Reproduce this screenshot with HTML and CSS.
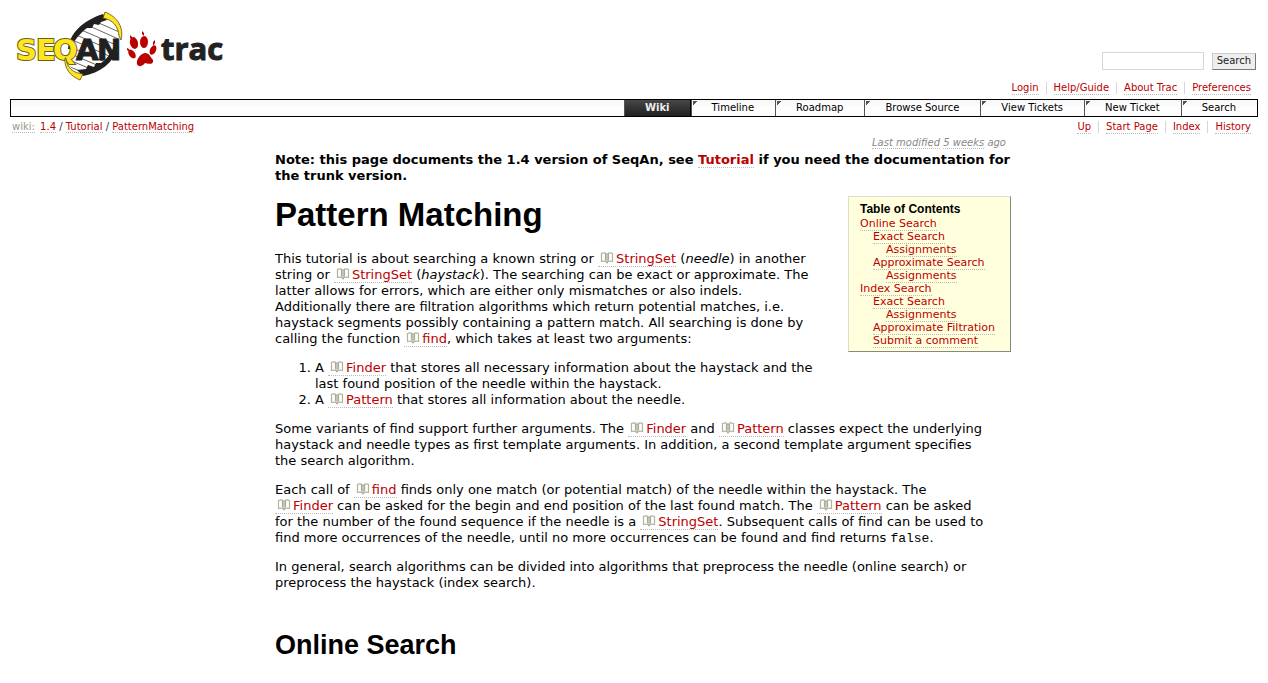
FILE: index.html
```
<!DOCTYPE html>
<html lang="en">
<head>
<meta charset="utf-8">
<title>Pattern Matching – SeqAn</title>
<link rel="stylesheet" href="styles.css">
</head>
<body>
<svg class="defs" aria-hidden="true">
  <symbol id="book" viewBox="0 0 14 12">
    <path d="M7 3C6 1 3.500 .7 1.500 1.500V9.500C3.500 9 6 9 7 10.800C8 9 10.500 9 12.500 9.500V1.500C10.500 .7 8 1 7 3Z" fill="#fffffb" stroke="#b0b2a0" stroke-width="1.200"/>
    <path d="M5.500 2V8.500M8.500 2V8.500M7 3.500V11" fill="none" stroke="#a9ab98" stroke-width="1.200"/>
  </symbol>
</svg>
<header class="banner">
  <a class="logo" href="#" aria-label="SeqAn trac">
    <svg width="216" height="76" viewBox="10 6 216 76" aria-hidden="true">
      <clipPath id="helix"><path d="M105 17C86 24 71 36 69 50L67 60C69 68 75 72 80 72C96 69 110 60 118 48L119 34C117 24 112 19 105 17Z"/></clipPath>
      <g fill="none" stroke="#666" stroke-width="1" clip-path="url(#helix)">
        <path d="M92 20l34 15M85 24l40 18M79 29l44 19M74 34l46 20M70 39l46 20M66 45l46 20M64 51l42 18M62 57l36 15M60 63l30 12"/>
      </g>
      <path d="M68 49C70 33 82 21 103 14L107 20L101 22L99 25L94 24L92 28L87 28C79 34 74 41 70 49Z" fill="#231f20"/>
      <path d="M119 47C113 63 100 73 83 76L77 70L86 69L88 65L94 67L96 63L101 63C107 59 111 53 114 46Z" fill="#231f20"/>
      <path d="M105 12C118 17 124 28 121 40L119 36C118 26 113 20 103 18Z" fill="#ffe51f" stroke="#554d12" stroke-width=".8"/>
      <text class="logo-seqan logo-black" x="76 97" y="60">AN</text>
      <text class="logo-seqan logo-yellow" x="16 36 53" y="60">SEQ</text>
      <path d="M66 58C67 68 73 73 83 74L80 80C70 76 64 68 65 58Z" fill="#ffe51f" stroke="#554d12" stroke-width=".8"/>
      <g fill="#bb0000">
        <ellipse cx="132" cy="54" rx="3" ry="5" transform="rotate(-35 132 54)"/>
        <ellipse cx="134" cy="43" rx="4" ry="6" transform="rotate(-14 134 43)"/>
        <ellipse cx="144" cy="42" rx="4" ry="6" transform="rotate(3 144 42)"/>
        <ellipse cx="153" cy="50" rx="3" ry="5" transform="rotate(25 153 50)"/>
        <path d="M145 53C150 53 150 57 153 60C154 65 148 64 145 63C142 67 138 67 137 64C136 60 140 54 145 53Z"/>
        <path d="M127 48l2 1 1 3-3-2zM130 35l2 2v3l-2-2zM142 31l2 2v3l-2-2zM155 40v3l-2 3v-4z"/>
      </g>
      <text class="logo-trac" x="161" y="60">trac</text>
    </svg>
  </a>
  <form class="search" role="search">
    <input type="text" class="search-box" aria-label="Search terms">
    <button type="button" class="search-button">Search</button>
  </form>
</header>
<nav class="links meta" aria-label="Account">
  <a href="#">Login</a><a href="#">Help/Guide</a><a href="#">About Trac</a><a href="#">Preferences</a>
</nav>
<nav class="mainnav" aria-label="Main">
  <a class="active" href="#">Wiki</a><a href="#">Timeline</a><a href="#">Roadmap</a><a href="#">Browse Source</a><a href="#">View Tickets</a><a href="#">New Ticket</a><a href="#">Search</a>
</nav>
<div class="subbar">
  <nav class="path" aria-label="Path"><a class="first" href="#">wiki:</a> <a href="#">1.4</a> / <a href="#">Tutorial</a> / <a href="#">PatternMatching</a></nav>
  <nav class="links" aria-label="Context"><a href="#">Up</a><a href="#">Start Page</a><a href="#">Index</a><a href="#">History</a></nav>
</div>
<main class="content">
  <p class="modified"><a href="#">Last modified</a> <a href="#">5 weeks</a> ago</p>
  <p class="note">Note: this page documents the 1.4 version of SeqAn, see <a href="#">Tutorial</a> if you need the documentation for the trunk version.</p>
  <aside class="toc">
    <h4>Table of Contents</h4>
    <ol>
      <li><a href="#">Online Search</a>
        <ol>
          <li><a href="#">Exact Search</a><ol><li><a href="#">Assignments</a></li></ol></li>
          <li><a href="#">Approximate Search</a><ol><li><a href="#">Assignments</a></li></ol></li>
        </ol>
      </li>
      <li><a href="#">Index Search</a>
        <ol>
          <li><a href="#">Exact Search</a><ol><li><a href="#">Assignments</a></li></ol></li>
          <li><a href="#">Approximate Filtration</a></li>
          <li><a href="#">Submit a comment</a></li>
        </ol>
      </li>
    </ol>
  </aside>
  <h1>Pattern Matching</h1>
  <p>This tutorial is about searching a known string or <a class="doc" href="#"><svg><use href="#book"/></svg>StringSet</a> (<em>needle</em>) in another<br>string or <a class="doc" href="#"><svg><use href="#book"/></svg>StringSet</a> (<em>haystack</em>). The searching can be exact or approximate. The<br>latter allows for errors, which are either only mismatches or also indels.<br>Additionally there are filtration algorithms which return potential matches, i.e.<br>haystack segments possibly containing a pattern match. All searching is done by<br>calling the function <a class="doc" href="#"><svg><use href="#book"/></svg>find</a>, which takes at least two arguments:</p>
  <ol class="args">
    <li>A <a class="doc" href="#"><svg><use href="#book"/></svg>Finder</a> that stores all necessary information about the haystack and the<br>last found position of the needle within the haystack.</li>
    <li>A <a class="doc" href="#"><svg><use href="#book"/></svg>Pattern</a> that stores all information about the needle.</li>
  </ol>
  <p>Some variants of find support further arguments. The <a class="doc" href="#"><svg><use href="#book"/></svg>Finder</a> and <a class="doc" href="#"><svg><use href="#book"/></svg>Pattern</a> classes expect the underlying<br>haystack and needle types as first template arguments. In addition, a second template argument specifies<br>the search algorithm.</p>
  <p>Each call of <a class="doc" href="#"><svg><use href="#book"/></svg>find</a> finds only one match (or potential match) of the needle within the haystack. The<br><a class="doc" href="#"><svg><use href="#book"/></svg>Finder</a> can be asked for the begin and end position of the last found match. The <a class="doc" href="#"><svg><use href="#book"/></svg>Pattern</a> can be asked<br>for the number of the found sequence if the needle is a <a class="doc" href="#"><svg><use href="#book"/></svg>StringSet</a>. Subsequent calls of find can be used to<br>find more occurrences of the needle, until no more occurrences can be found and find returns <code>false</code>.</p>
  <p>In general, search algorithms can be divided into algorithms that preprocess the needle (online search) or<br>preprocess the haystack (index search).</p>
  <h2>Online Search</h2>
</main>
</body>
</html>
```
FILE: styles.css
```
body {
  margin: 10px;
  background: #fff;
  color: #000;
  font: 13px/16px Verdana, "DejaVu Sans", sans-serif;
}
a {
  color: #b00;
  text-decoration: none;
  border-bottom: 1px dotted #bbb;
}
.defs { position: absolute; width: 0; height: 0; }

.banner {
  display: flex;
  justify-content: space-between;
  align-items: flex-end;
  height: 70px;
}
.logo { border: 0; margin-bottom: -2px; }
.logo svg { display: block; }
.logo-seqan { font: bold 29px "DejaVu Sans", sans-serif; }
.logo-yellow { fill: #ffe51f; stroke: #6b6218; stroke-width: 2px; paint-order: stroke; }
.logo-black { fill: #231f20; stroke: #231f20; stroke-width: 1px; }
.logo-trac { font: bold 31px "Open Sans", sans-serif; fill: #222; stroke: #222; stroke-width: 1px; }

.search { display: flex; align-items: center; gap: 8px; margin: 0 2px 10px 0; }
.search-box {
  box-sizing: border-box;
  width: 102px;
  height: 18px;
  border: 1px solid #d7d7d7;
  padding: 1px 3px;
}
.search-button {
  box-sizing: border-box;
  height: 17px;
  padding: 0 4px;
  border: 1px outset #ccc;
  background: #eee;
  color: #222;
  font: 10px/14px Verdana, "DejaVu Sans", sans-serif;
}

.links {
  display: flex;
  justify-content: flex-end;
  font-size: 10px;
  line-height: 12px;
}
.links a { margin-left: 15px; position: relative; }
.links a + a::before {
  content: "";
  position: absolute;
  left: -8px;
  top: 0;
  height: 12px;
  border-left: 1px solid #d7d7d7;
}
.meta { padding: 2px 7px 4px 0; }

.mainnav {
  display: flex;
  justify-content: flex-end;
  border: 1px solid #000;
  background: linear-gradient(#f7f7f7, #fff 60%, #fafafa);
  font-size: 10px;
  line-height: 16px;
}
.mainnav a {
  padding: 0 21px 0 20px;
  border: 0;
  border-left: 1px solid #555;
  color: #000;
  background: linear-gradient(135deg, #555 3px, transparent 3px) 1px 1px no-repeat;
}
.mainnav .active {
  padding: 0 20px;
  background: linear-gradient(#484848, #333 50%, #222);
  border-right: 1px solid #000;
  color: #eee;
  font-weight: bold;
}

.subbar {
  display: flex;
  justify-content: space-between;
  padding: 4px 7px 0 2px;
  color: #333;
  font-size: 10px;
  line-height: 12px;
}
.path .first { color: #998; margin-right: 2px; }

.content { max-width: 736px; margin: 0 auto; padding-left: 18px; }
.modified {
  margin: 3px 5px 0 0;
  color: #888;
  font-size: 10px;
  line-height: 12px;
  font-style: italic;
  text-align: right;
}
.modified a { color: inherit; }
.note { margin: 3px 0 12px; font-weight: bold; }
p { margin: 0 0 13px; }
h1, h2, h4 { font-family: Arial, "Liberation Sans", sans-serif; }
h1 { margin: 0 0 17px; font-size: 33px; line-height: 38px; }
h2 { margin: 36px 0 20px; font-size: 27px; line-height: 36px; }
.doc { padding-left: 2px; }
.doc svg { width: 14px; height: 12px; margin-right: 2px; vertical-align: -1px; }
.args { margin: 0 0 13px; padding-left: 40px; }
code { font: 13px/14px "Courier New", "Liberation Mono", monospace; }

.toc {
  float: right;
  box-sizing: border-box;
  min-width: 163px;
  margin: 0 0 16px 16px;
  padding: 5px 11px 4px;
  border: 1px outset #ddc;
  background: #ffd;
  font-size: 11px;
  line-height: 13px;
}
.toc h4 { margin: 0; font-size: 12px; line-height: 15px; }
.toc ol { margin: 0; padding: 0; list-style: none; }
.toc ol ol { padding-left: 13px; }
```
